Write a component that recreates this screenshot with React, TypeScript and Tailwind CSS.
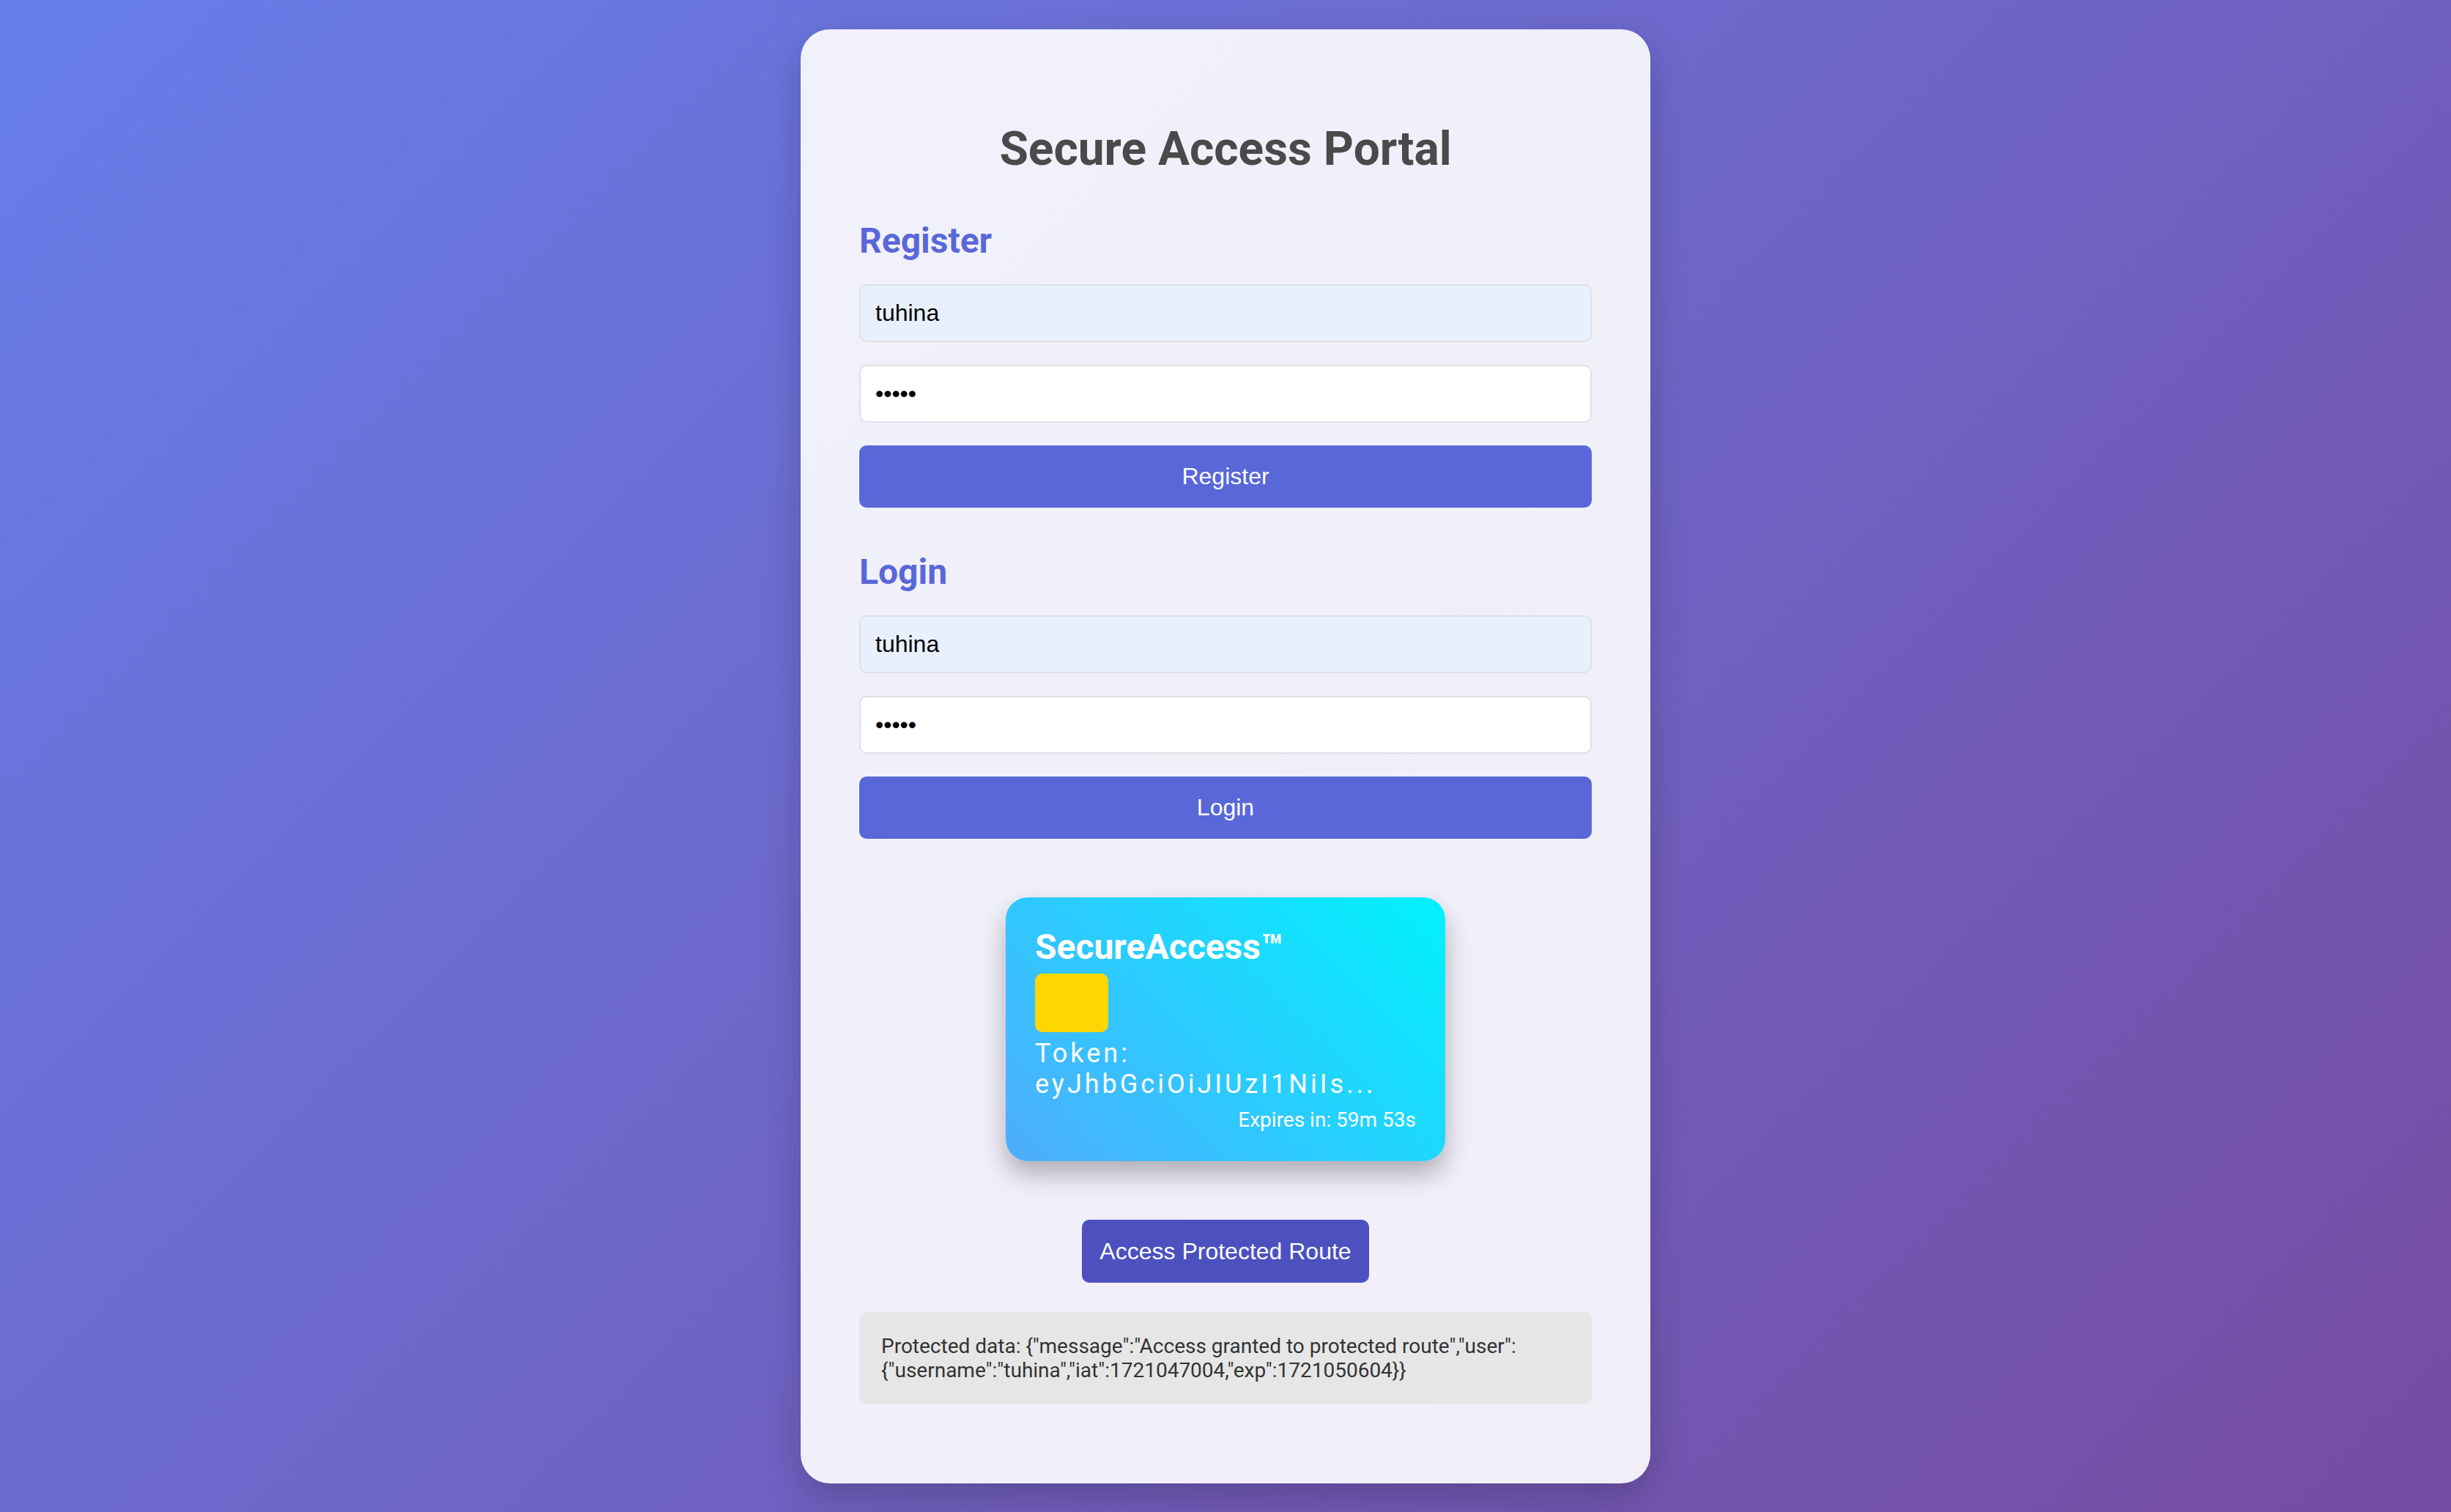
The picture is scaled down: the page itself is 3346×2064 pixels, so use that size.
import React from 'react'

const inputCls =
  "block w-full h-[79px] px-[20px] border-2 border-[#e0e0e6] rounded-[10px] text-[32px] text-black font-['Liberation_Sans',Arial,sans-serif] outline-none"

const buttonCls =
  "block w-full h-[85px] rounded-[10px] bg-[#5a67d8] text-white text-[32px] font-['Liberation_Sans',Arial,sans-serif]"

const protectedText =
  'Protected data: {"message":"Access granted to protected route","user":{"username":"tuhina","iat":1721047004,"exp":1721050604}}'

function AuthSection({ title, button }: { title: string; button: string }) {
  return (
    <div className="flex flex-col gap-[31px]">
      <h2 className="text-[48px] leading-[56px] font-bold text-[#5a67d8]">{title}</h2>
      {/* autofilled username */}
      <input className={`${inputCls} bg-[#e8f0fe]`} defaultValue="tuhina" readOnly />
      <input className={`${inputCls} bg-white`} type="password" defaultValue="12345" readOnly />
      <button className={buttonCls}>{button}</button>
    </div>
  )
}

function TokenCard() {
  return (
    <div className="mx-auto mt-[80px] w-[600px] p-[40px] rounded-[30px] text-white bg-[linear-gradient(45deg,#4facfe_0%,#00f2fe_100%)] shadow-[0_18px_34px_rgba(0,0,0,0.28)]">
      <h3 className="text-[48px] leading-[56px] font-bold">SecureAccess™</h3>
      <div className="my-[8px] w-[100px] h-[80px] rounded-[10px] bg-[#ffd700]" />
      <p className="text-[36px] leading-[42px] tracking-[4px] break-words">Token: eyJhbGciOiJIUzI1NiIs...</p>
      <p className="mt-[11px] text-[28px] leading-[33px] text-right">Expires in: 59m 53s</p>
    </div>
  )
}

export default function App() {
  return (
    <div className="min-h-screen flex items-center justify-center bg-[linear-gradient(135deg,#667eea_0%,#764ba2_100%)] font-['Roboto',sans-serif]">
      <div className="w-[1160px] p-[80px] rounded-[40px] bg-white/90 shadow-[0_20px_50px_rgba(0,0,0,0.2)]">
        <h1 className="mt-[46px] text-[64px] leading-[75px] font-bold text-center text-[#4a4a4a]">
          Secure Access Portal
        </h1>

        <div className="mt-[60px]">
          <AuthSection title="Register" button="Register" />
        </div>
        <div className="mt-[60px]">
          <AuthSection title="Login" button="Login" />
        </div>

        <TokenCard />

        <div className="mt-[80px] flex justify-center">
          <button className="h-[86px] px-[24px] rounded-[10px] bg-[#4c51bf] text-white text-[32px] font-['Liberation_Sans',Arial,sans-serif]">
            Access Protected Route
          </button>
        </div>

        <p className="mt-[40px] mb-[28px] p-[30px] rounded-[10px] bg-[#e6e6e6] text-[28px] leading-[33px] text-[#333333] break-words">
          {protectedText}
        </p>
      </div>
    </div>
  )
}
